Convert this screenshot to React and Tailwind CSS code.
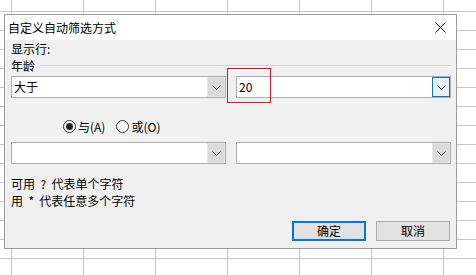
import React, { useState } from 'react';

const font = { fontFamily: '"Noto Sans CJK SC", "Microsoft YaHei", sans-serif' };

const Chevron = () => (
  <svg width="9" height="5" viewBox="0 0 9 5">
    <path d="M0.5 0.5 L4.5 4.5 L8.5 0.5" fill="none" stroke="#444" strokeWidth="1" />
  </svg>
);

// Excel-ish grid behind the dialog
const SheetGrid = () => {
  const rows = Array.from({ length: 15 });
  const cols = Array.from({ length: 7 });
  return (
    <div className="flex flex-col">
      {rows.map((_, r) => (
        <div key={r} className={`flex border-b border-[#c6c6c6] ${r === 0 ? 'h-[12px]' : 'h-[19px]'}`}>
          <div className="w-[12px] shrink-0 border-r border-[#c6c6c6]" />
          {cols.map((_, c) => (
            <div key={c} className="w-[72px] shrink-0 border-r border-[#c6c6c6]" />
          ))}
        </div>
      ))}
    </div>
  );
};

const ComboBox = ({ value, focused }) => (
  <div className="flex h-[22px] border border-[#adadad] bg-white">
    <div className="flex-1 pl-[2px] text-[12px] leading-[20px] text-black">{value}</div>
    <div
      className={`flex w-[18px] items-center justify-center ${
        focused ? 'border border-[#0078d7] bg-[#e5f1fb]' : 'border border-[#e6e6e6] bg-[#dadada]'
      }`}
    >
      <Chevron />
    </div>
  </div>
);

const Radio = ({ checked, label, onClick }) => (
  <button onClick={onClick} className="flex items-center gap-[2px] text-[12px] leading-[13px] text-black">
    <span className="flex h-[13px] w-[13px] items-center justify-center rounded-full border border-[#333] bg-white">
      {checked && <span className="h-[7px] w-[7px] rounded-full bg-[#222]" />}
    </span>
    <span>{label}</span>
  </button>
);

export default function App() {
  const [mode, setMode] = useState('and');

  return (
    <div className="relative h-[275px] w-[476px] overflow-hidden bg-white" style={font}>
      <SheetGrid />

      {/* dialog window */}
      <div className="absolute left-[4px] top-[14px] flex h-[235px] w-[453px] flex-col border border-[#9b9b9b] bg-[#f0f0f0]">
        <div className="flex h-[25px] items-center justify-between bg-white pl-[3px] pr-[10px]">
          <span className="text-[12px] text-black">自定义自动筛选方式</span>
          <svg width="11" height="11" viewBox="0 0 11 11">
            <path d="M0.5 0.5 L10.5 10.5 M10.5 0.5 L0.5 10.5" stroke="#111" strokeWidth="1" />
          </svg>
        </div>

        <div className="flex flex-col pl-[6px] pr-[5px] text-[12px] text-black">
          <div className="leading-[17px]">显示行:</div>
          <div className="flex h-[17px] items-center gap-[4px] leading-[17px]">
            <span>年龄</span>
            <div className="h-px flex-1 bg-[#d5d5d5]" />
          </div>

          <div className="mt-[2px] grid grid-cols-2 gap-[10px]">
            <ComboBox value="大于" />
            <ComboBox value="20" focused />
          </div>

          <div className="mt-[22px] flex h-[13px] gap-[11px] pl-[52px]">
            <Radio checked={mode === 'and'} label="与(A)" onClick={() => setMode('and')} />
            <Radio checked={mode === 'or'} label="或(O)" onClick={() => setMode('or')} />
          </div>

          <div className="mt-[9px] grid grid-cols-2 gap-[10px]">
            <ComboBox value="" />
            <ComboBox value="" />
          </div>

          <div className="mt-[11px] leading-[17px]">
            <div>可用&nbsp;&nbsp;?&nbsp;&nbsp;代表单个字符</div>
            <div>用&nbsp;&nbsp;*&nbsp;&nbsp;代表任意多个字符</div>
          </div>

          <div className="mt-[12px] flex justify-end gap-[10px] pr-[1px]">
            <button className="h-[20px] w-[74px] border-2 border-[#0078d7] bg-[#e1e1e1] text-[12px] leading-[16px]">
              确定
            </button>
            <button className="h-[20px] w-[74px] border border-[#adadad] bg-[#e1e1e1] text-[12px] leading-[18px]">
              取消
            </button>
          </div>
        </div>
      </div>

      {/* red annotation box */}
      <div className="absolute left-[227px] top-[68px] h-[35px] w-[44px] border border-[#e81010]" />
    </div>
  );
}
